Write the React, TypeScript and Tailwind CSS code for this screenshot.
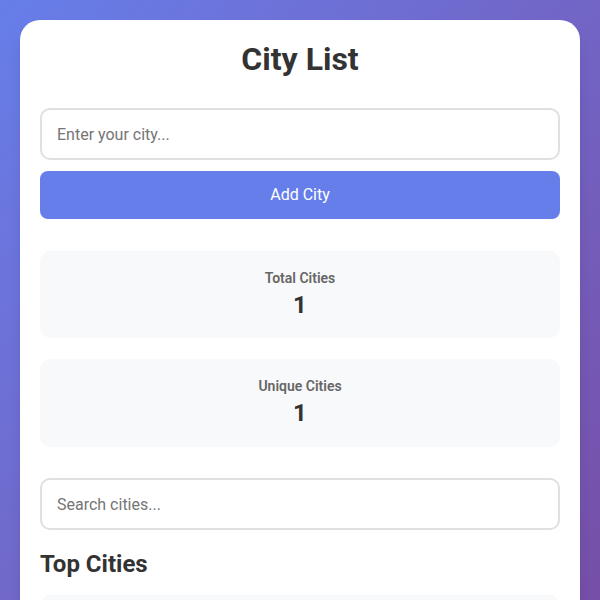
import { useState } from 'react';

export default function App() {
  const [city, setCity] = useState('');
  const [query, setQuery] = useState('');
  const [cities] = useState<string[]>(['London']);

  const unique = new Set(cities.map((c) => c.toLowerCase())).size;

  return (
    <div
      className="min-h-screen bg-gradient-to-br from-[#667eea] to-[#764ba2] p-5"
      style={{ fontFamily: 'Roboto, "Liberation Sans", sans-serif' }}
    >
      <div className="bg-white rounded-[20px] px-5 pt-5 pb-6 shadow-lg">
        {/* Title */}
        <h1 className="text-[32px] leading-[38px] font-bold text-[#333] text-center mb-[30px]">
          City List
        </h1>

        {/* Add form */}
        <input
          value={city}
          onChange={(e) => setCity(e.target.value)}
          placeholder="Enter your city..."
          className="w-full h-[52px] px-[15px] border-2 border-[#e0e0e0] rounded-[10px] text-base text-[#333] placeholder-[#757575] outline-none mb-[11px]"
        />
        <button className="w-full h-[48px] bg-[#667eea] text-white text-base rounded-[8px] mb-[32px]">
          Add City
        </button>

        {/* Stats */}
        <div className="flex flex-col gap-[21px] mb-[31px]">
          <div className="bg-[#f8f9fa] rounded-[10px] h-[87px] flex flex-col items-center pt-[18px]">
            <span className="text-sm font-semibold text-[#666] leading-[18px]">Total Cities</span>
            <span className="text-2xl font-bold text-[#333] leading-[28px] mt-[4px]">{cities.length}</span>
          </div>
          <div className="bg-[#f8f9fa] rounded-[10px] h-[88px] flex flex-col items-center pt-[18px]">
            <span className="text-sm font-semibold text-[#666] leading-[18px]">Unique Cities</span>
            <span className="text-2xl font-bold text-[#333] leading-[28px] mt-[4px]">{unique}</span>
          </div>
        </div>

        {/* Search */}
        <input
          value={query}
          onChange={(e) => setQuery(e.target.value)}
          placeholder="Search cities..."
          className="w-full h-[52px] px-[15px] border-2 border-[#e0e0e0] rounded-[10px] text-base text-[#333] placeholder-[#757575] outline-none mb-[20px]"
        />

        <h2 className="text-2xl font-bold text-[#333] leading-[28px] mb-[17px]">Top Cities</h2>
        <div className="bg-[#f8f9fa] rounded-[10px] h-[60px]" />
      </div>
    </div>
  );
}
